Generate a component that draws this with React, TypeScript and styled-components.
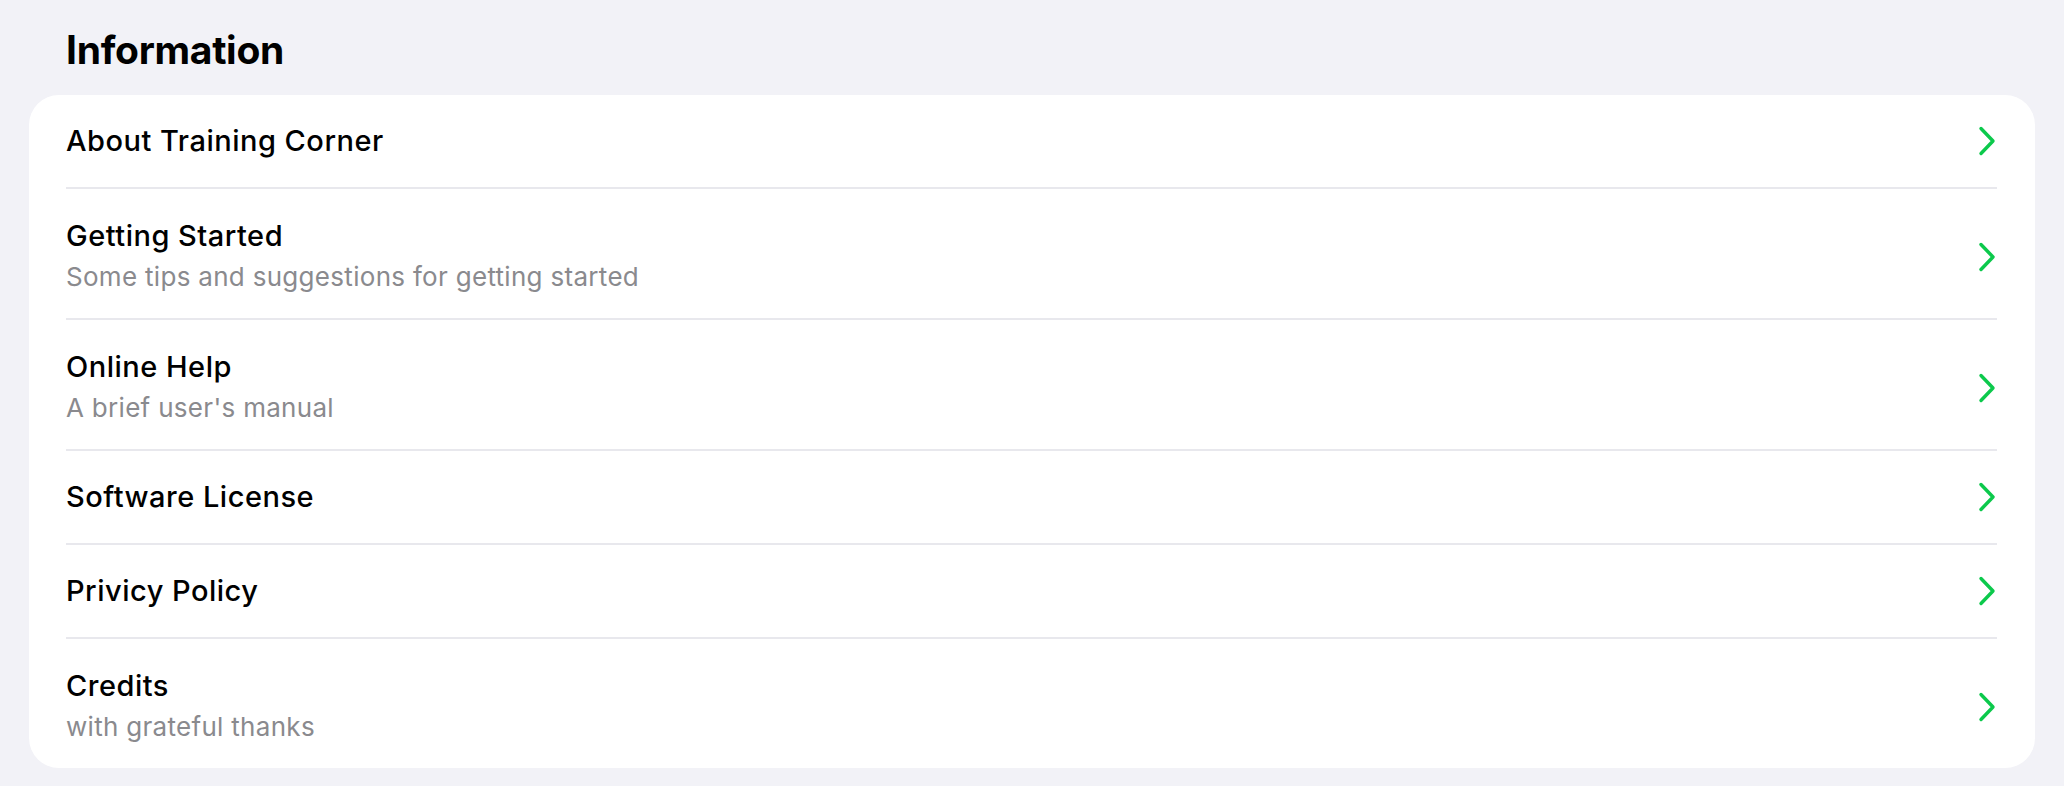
import React from "react";
import styled, { createGlobalStyle } from "styled-components";

const GlobalStyle = createGlobalStyle`
  html, body {
    margin: 0;
    padding: 0;
    background: #f2f2f7;
  }
  body {
    font-family: Inter, "Noto Sans", "Liberation Sans", sans-serif;
    -webkit-font-smoothing: antialiased;
  }
`;

type Item = {
  title: string;
  subtitle?: string;
};

const items: Item[] = [
  { title: "About Training Corner" },
  { title: "Getting Started", subtitle: "Some tips and suggestions for getting started" },
  { title: "Online Help", subtitle: "A brief user's manual" },
  { title: "Software License" },
  { title: "Privicy Policy" },
  { title: "Credits", subtitle: "with grateful thanks" },
];

const Page = styled.div`
  padding: 26px 29px 0;
`;

const Heading = styled.h2`
  margin: 0 0 21px 37px;
  font-size: 39px;
  line-height: 48px;
  font-weight: 700;
  color: #000;
  letter-spacing: -0.3px;
`;

const Card = styled.div`
  background: #fff;
  border-radius: 30px;
  overflow: hidden;
`;

const Row = styled.a`
  display: block;
  padding-left: 37px;
  padding-right: 38px;
  text-decoration: none;
  cursor: pointer;
`;

const RowInner = styled.div<{ $last?: boolean; $double?: boolean }>`
  display: flex;
  align-items: center;
  gap: 16px;
  padding: ${({ $double }) => ($double ? "30px 0 23px" : "29px 0")};
  border-bottom: ${({ $last }) => ($last ? "none" : "2px solid #e8e8ed")};
`;

const Text = styled.div`
  flex: 1;
  display: flex;
  flex-direction: column;
  gap: 6px;
`;

const Title = styled.span`
  font-size: 29px;
  line-height: 34px;
  font-weight: 500;
  letter-spacing: 0.5px;
  color: #000;
`;

const Subtitle = styled.span`
  font-size: 26px;
  line-height: 36px;
  font-weight: 400;
  letter-spacing: 0.3px;
  color: #8a8a8e;
`;

const Chevron = () => (
  <svg width="20" height="30" viewBox="0 0 20 30" fill="none">
    <path
      d="M4 2.5 L16 15 L4 27.5"
      stroke="#0cc94c"
      strokeWidth="3.4"
      strokeLinecap="round"
      strokeLinejoin="round"
    />
  </svg>
);

export default function App() {
  return (
    <>
      <GlobalStyle />
      <Page>
        <Heading>Information</Heading>
        <Card>
          {items.map((item, i) => (
            <Row key={item.title}>
              <RowInner $last={i === items.length - 1} $double={!!item.subtitle}>
                <Text>
                  <Title>{item.title}</Title>
                  {item.subtitle && <Subtitle>{item.subtitle}</Subtitle>}
                </Text>
                <Chevron />
              </RowInner>
            </Row>
          ))}
        </Card>
      </Page>
    </>
  );
}
